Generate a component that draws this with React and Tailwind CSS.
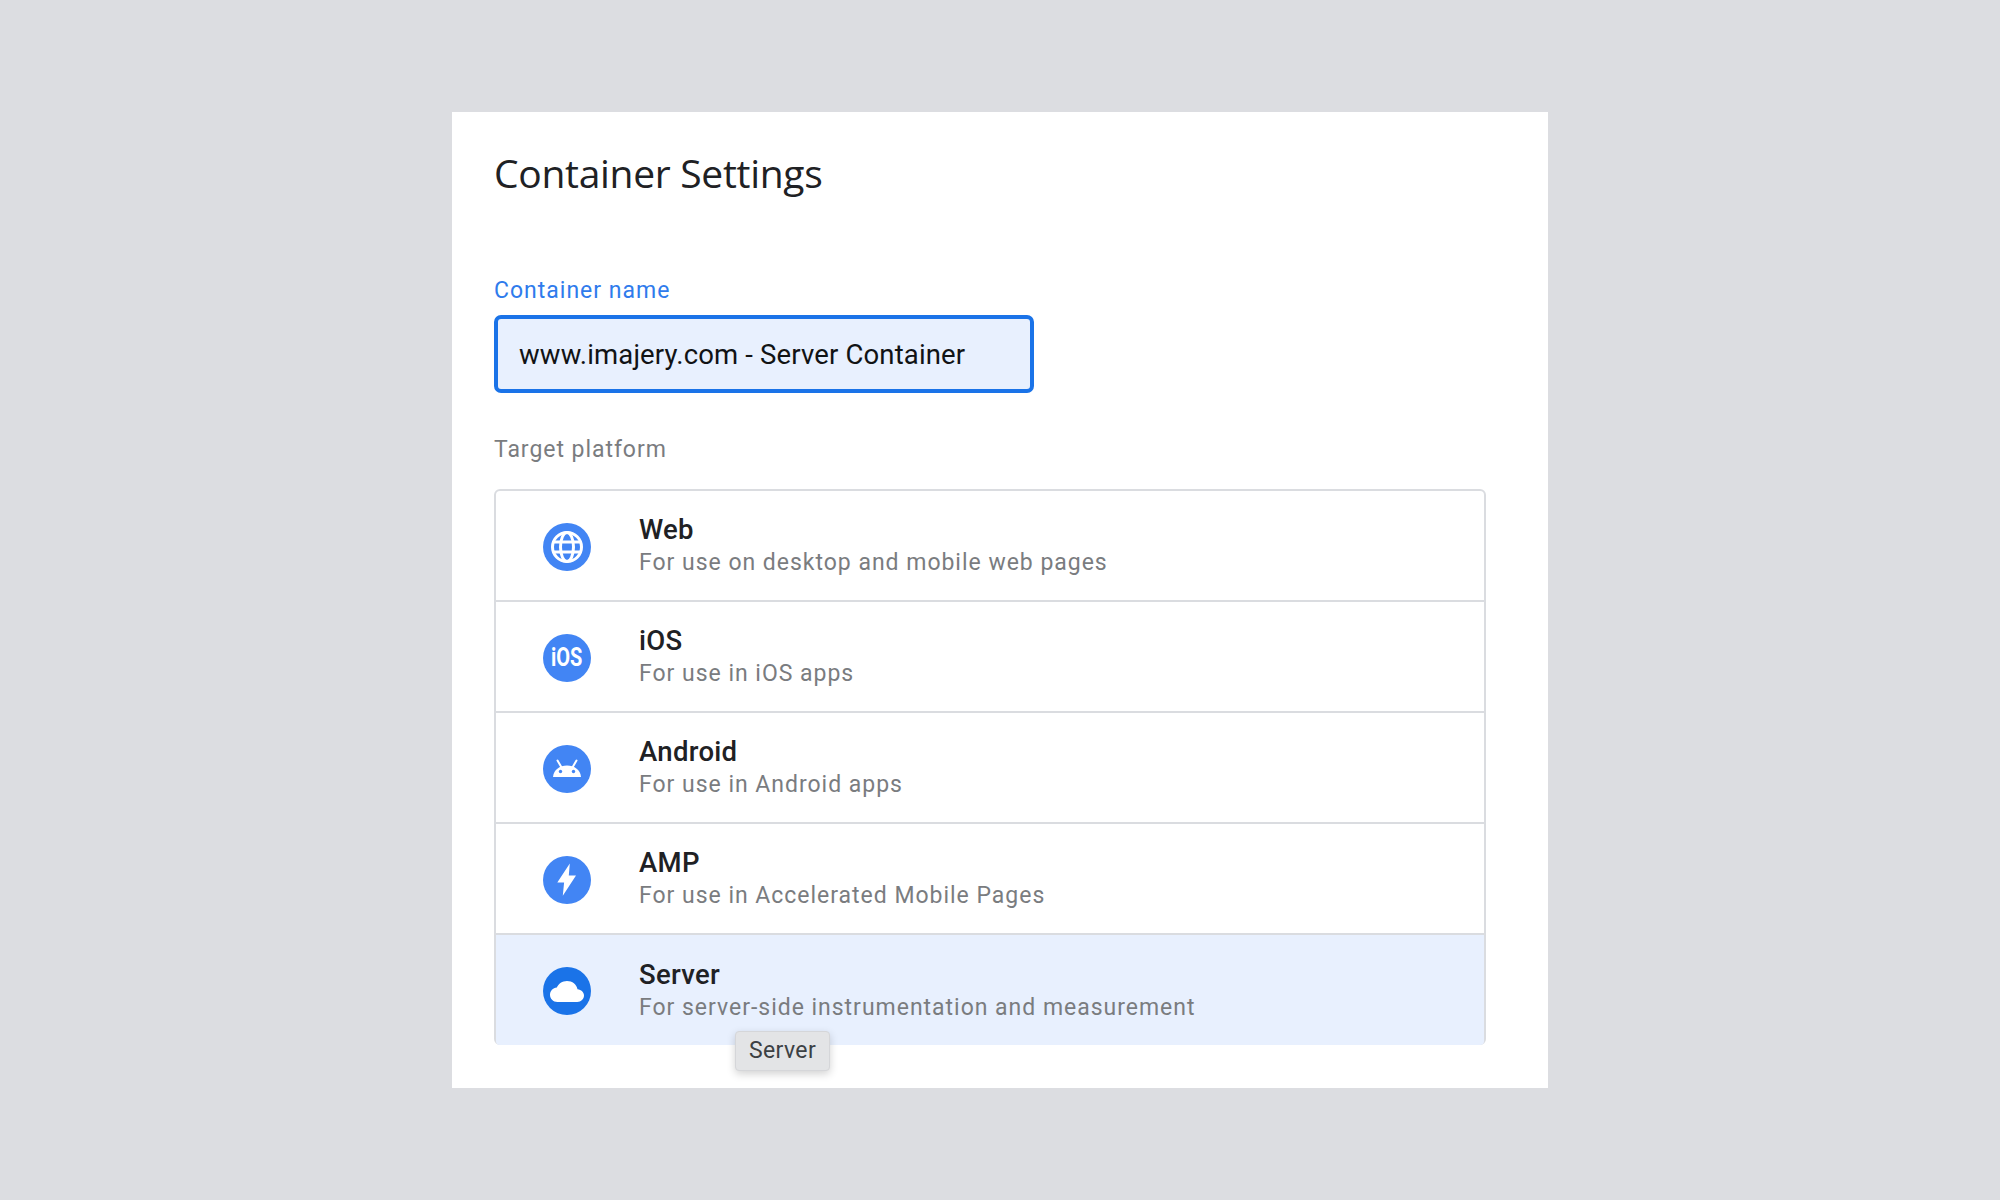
const platforms = [
  { id: 'web', name: 'Web', desc: 'For use on desktop and mobile web pages' },
  { id: 'ios', name: 'iOS', desc: 'For use in iOS apps' },
  { id: 'android', name: 'Android', desc: 'For use in Android apps' },
  { id: 'amp', name: 'AMP', desc: 'For use in Accelerated Mobile Pages' },
  { id: 'server', name: 'Server', desc: 'For server-side instrumentation and measurement' },
];

const PlatformIcon = ({ id }) => {
  if (id === 'ios') {
    return (
      <div className="flex h-12 w-12 shrink-0 items-center justify-center rounded-full bg-[#4285f4] font-['Roboto',sans-serif] text-[25px] font-bold text-white">
        <span className="scale-x-[0.8]">iOS</span>
      </div>
    );
  }

  return (
    <svg viewBox="0 0 48 48" className="h-12 w-12 shrink-0">
      <circle cx="24" cy="24" r="24" fill={id === 'server' ? '#1a73e8' : '#4285f4'} />
      {id === 'web' && (
        <g fill="none" stroke="#fff" strokeWidth="3">
          <circle cx="24" cy="24" r="14.500" />
          <ellipse cx="24" cy="24" rx="6.500" ry="14.500" />
          <path d="M10.500 19h27M10.500 29h27" />
        </g>
      )}
      {id === 'android' && (
        <g>
          <path d="M10 32c.5-6.800 6.500-11.500 14-11.500S37.500 25.200 38 32z" fill="#fff" />
          <path d="M14.500 15.500l3.800 6.500M33.500 15.500l-3.800 6.500" stroke="#fff" strokeWidth="2" strokeLinecap="round" />
          <circle cx="17.500" cy="26.500" r="1.700" fill="#4285f4" />
          <circle cx="30.500" cy="26.500" r="1.700" fill="#4285f4" />
        </g>
      )}
      {id === 'amp' && <path d="M26.800 7.500 14.300 26.500h6.800L19.800 39.800 33 19.500h-7.200z" fill="#fff" />}
      {id === 'server' && (
        <path d="M14.500 35C10 35 7 31.800 7 27.800c0-3.800 2.900-6.900 6.800-7.300C15.500 16.800 19.300 14 24 14c5.300 0 9.700 3.500 10.500 8.300 3.700.3 6.500 2.900 6.500 6.300 0 3.600-3 6.400-6.700 6.400z" fill="#fff" />
      )}
    </svg>
  );
};

const App = () => {
  return (
    <div className="flex h-screen w-full items-center justify-center bg-[#dcdde1] font-['Roboto',sans-serif]">
      <div className="h-[976px] w-[1096px] bg-white pl-[42px] pr-[62px] pt-[37px]">
        <h1 className="font-['Open_Sans',sans-serif] text-[39px] leading-[48px] tracking-[-0.3px] text-[#202124]">
          Container Settings
        </h1>

        <label className="mt-[80px] block text-[23px] leading-[28px] tracking-[1px] text-[#2f7bec]">
          Container name
        </label>
        <div className="mt-[10px] flex h-[78px] w-[540px] items-center rounded-[7px] border-4 border-[#1a73e8] bg-[#e8f0fe] pl-[21px] pt-[1px] text-[27.500px] tracking-[0.15px] text-[#111315]">
          www.imajery.com - Server Container
        </div>

        <p className="mt-[43px] text-[23px] leading-[28px] tracking-[0.95px] text-[#7a7c7f]">Target platform</p>

        <div className="relative mt-[25px] h-[556px] rounded-[6px] border-2 border-[#dadce0]">
          {platforms.map((platform, i) => (
            <div
              key={platform.id}
              className={
                'flex items-center gap-12 pl-[47px] pt-[2px] ' +
                (i === 0 ? 'h-[109px] ' : platform.id === 'server' ? 'h-[112px] border-t-2 border-[#dadce0] ' : 'h-[111px] border-t-2 border-[#dadce0] ') +
                (platform.id === 'server' ? 'rounded-b-[4px] bg-[#e8f0fe]' : '')
              }
            >
              <PlatformIcon id={platform.id} />
              <div className="pb-[1px]">
                <div className="text-[27.500px] font-medium leading-[34px] tracking-[0.3px] text-[#202124]">{platform.name}</div>
                <div className="text-[23px] leading-[32px] tracking-[0.98px] text-[#7a7c7f]">{platform.desc}</div>
              </div>
            </div>
          ))}

          <div className="absolute left-[239px] top-[540px] flex h-10 w-[95px] items-center justify-center rounded-[4px] border border-[#d5d6d9] bg-[#e3e4e6] pt-[1px] text-[23px] tracking-[0.4px] text-[#3c4043] shadow-[0_3px_8px_rgba(0,0,0,0.18)]">
            Server
          </div>
        </div>
      </div>
    </div>
  );
};

export default App;
